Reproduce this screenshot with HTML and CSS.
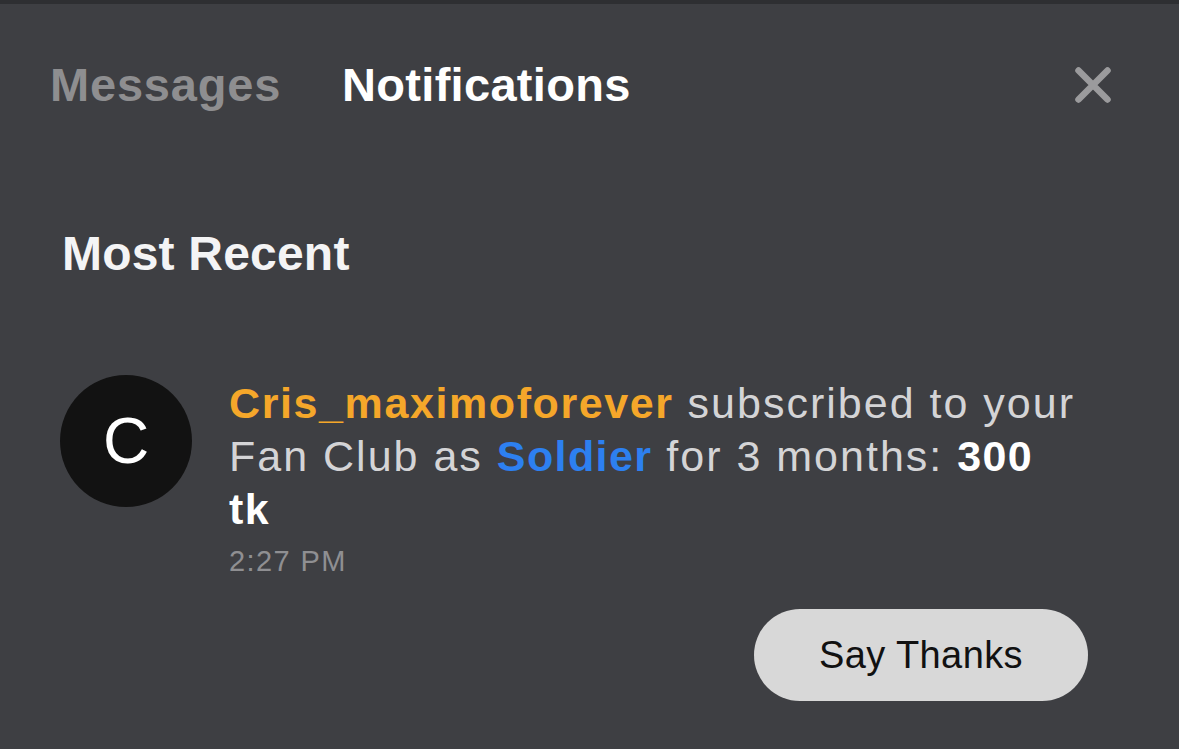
FILE: index.html
```html
<!DOCTYPE html>
<html lang="en">
<head>
<meta charset="utf-8">
<title>Notifications</title>
<link rel="stylesheet" href="styles.css">
</head>
<body>
<div class="panel">
  <div class="top-strip"></div>
  <header class="header">
    <nav class="tabs">
      <span class="tab">Messages</span>
      <span class="tab tab-active">Notifications</span>
    </nav>
    <button class="close" aria-label="Close">
      <svg width="36" height="36" viewBox="0 0 36 36">
        <path d="M3.5 3.5 L32.5 32.5 M32.5 3.5 L3.5 32.5" stroke="#9b9b9d" stroke-width="6.5" stroke-linecap="round" fill="none"/>
      </svg>
    </button>
  </header>
  <h2 class="section-title">Most Recent</h2>
  <div class="notification">
    <div class="avatar">C</div>
    <div class="body">
      <p class="text"><span class="user">Cris_maximoforever</span> subscribed to your Fan Club as <span class="tier">Soldier</span> for 3 months: <strong class="amount">300 tk</strong></p>
      <div class="time">2:27 PM</div>
    </div>
  </div>
  <div class="actions">
    <button class="thanks">Say Thanks</button>
  </div>
</div>
</body>
</html>
```

FILE: styles.css
```css
html, body {
  margin: 0;
  padding: 0;
  background: #3e3f43;
}
body {
  font-family: "Liberation Sans", Arial, sans-serif;
  width: 1179px;
  height: 749px;
  overflow: hidden;
}
.panel {
  display: flex;
  flex-direction: column;
  height: 749px;
}
.top-strip {
  height: 4px;
  background: #2e2f32;
}
.header {
  display: flex;
  align-items: flex-start;
  padding: 57px 68px 0 50px;
}
.tabs {
  display: flex;
  gap: 61px;
}
.tab {
  font-size: 47px;
  line-height: 47px;
  font-weight: bold;
  color: #8e8e90;
  letter-spacing: 0.8px;
}
.tab-active {
  color: #ffffff;
  letter-spacing: 0.3px;
}
.close {
  margin-left: auto;
  margin-top: 6px;
  padding: 0;
  border: 0;
  background: none;
  width: 36px;
  height: 36px;
  display: flex;
}
.section-title {
  margin: 121px 0 0 62px;
  font-size: 48px;
  line-height: 49px;
  font-weight: bold;
  color: #f4f4f5;
  letter-spacing: 0.2px;
}
.notification {
  display: flex;
  align-items: flex-start;
  gap: 37px;
  margin: 97px 0 0 60px;
}
.avatar {
  flex: none;
  width: 132px;
  height: 132px;
  border-radius: 50%;
  background: #121212;
  color: #ffffff;
  font-size: 64px;
  display: flex;
  align-items: center;
  justify-content: center;
}
.body {
  width: 852px;
  margin-top: 2px;
}
.text {
  margin: 0;
  font-size: 43px;
  line-height: 53px;
  letter-spacing: 2px;
  color: #d4d4d6;
}
.user {
  font-weight: bold;
  color: #f5a72a;
  letter-spacing: 1.6px;
}
.tier {
  font-weight: bold;
  color: #2d80f0;
  letter-spacing: 1.4px;
}
.amount {
  color: #ffffff;
  letter-spacing: 1.4px;
}
.time {
  margin-top: 8px;
  font-size: 29px;
  line-height: 34px;
  letter-spacing: 1.4px;
  color: #8f8f92;
}
.actions {
  display: flex;
  justify-content: flex-end;
  padding-right: 91px;
  margin-top: 31px;
}
.thanks {
  width: 334px;
  height: 92px;
  border: 0;
  border-radius: 46px;
  background: #d8d8d8;
  color: #111111;
  font-family: "Liberation Sans", Arial, sans-serif;
  font-size: 38px;
  letter-spacing: 0.4px;
  padding: 0;
}
```
